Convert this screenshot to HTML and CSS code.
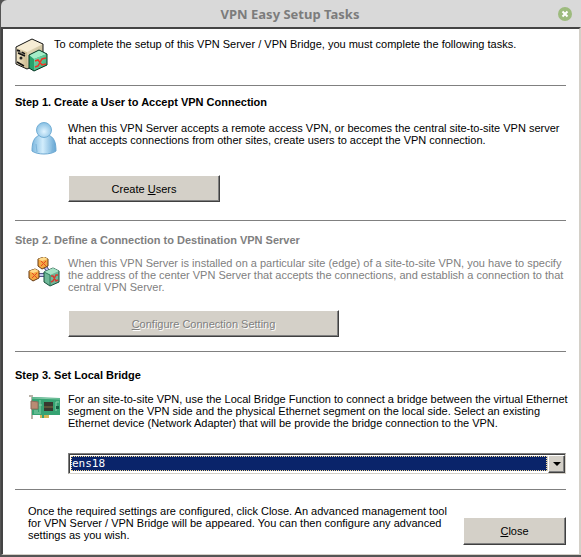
FILE: index.html
```
<!DOCTYPE html>
<html lang="en">
  <head>
    <meta charset="UTF-8" />
    <meta name="viewport" content="width=device-width, initial-scale=1.0" />
    <title>VPN Easy Setup Tasks</title>
    <link rel="stylesheet" href="styles.css" />
  </head>
  <body>
    <div class="window">
      <header class="titlebar">
        <h1>VPN Easy Setup Tasks</h1>
        <button class="win-close" type="button" aria-label="Close window">
          <svg width="14" height="14" viewBox="0 0 14 14">
            <circle cx="7" cy="7" r="7" fill="#9dbb7e" />
            <path d="M4.5 4.5l5 5M9.5 4.5l-5 5" stroke="#fff" stroke-width="2" />
          </svg>
        </button>
      </header>
      <main class="content">
        <section class="intro">
          <svg class="icon" width="34" height="34" viewBox="0 0 34 34">
            <defs>
              <linearGradient id="side" x1="0" y1="0" x2="1" y2="1">
                <stop offset="0" stop-color="#fff8df" />
                <stop offset="1" stop-color="#b7a77f" />
              </linearGradient>
              <linearGradient id="front" x1="0" y1="0" x2="1" y2="0">
                <stop offset="0" stop-color="#f4e9ca" />
                <stop offset="1" stop-color="#cdbb91" />
              </linearGradient>
              <linearGradient id="green" x1="0" y1="0" x2="1" y2="1">
                <stop offset="0" stop-color="#7fdcae" />
                <stop offset="1" stop-color="#2fa873" />
              </linearGradient>
            </defs>
            <path d="M1 9L17 1l11 5v18L12 31 1 26z" fill="url(#side)" />
            <path d="M1 9l11 5v17L1 26z" fill="url(#front)" />
            <path d="M1 9L17 1l11 5-16 8z" fill="#f6ecd4" />
            <path d="M1 9L17 1l11 5v18L12 31 1 26z" fill="none" stroke="#151515" />
            <path d="M2 12l8 3v2l-8-3z" fill="#8b8678" />
            <path d="M2 12l3 1M7 14l3 2M3 15l7 3M2 24l7 4" stroke="#111" stroke-width="1.5" />
            <circle cx="6" cy="20" r="1.5" fill="#222" />
            <path d="M14 17l10-5 8 4v11l-13 6-5-3z" fill="#28a16c" />
            <path d="M14 17l10-5 8 4-13 5z" fill="#a3ecc7" />
            <path d="M19 21l13-5v11l-13 6z" fill="url(#green)" />
            <path d="M14 17l10-5 8 4v11l-13 6-5-3z" fill="none" stroke="#063624" />
            <path d="M20 23l3-1 4 5 4-1M20 29l3-1 4-7 4-1" fill="none" stroke="#f03224" stroke-width="1.5" />
          </svg>
          <p>To complete the setup of this VPN Server / VPN Bridge, you must complete the following tasks.</p>
        </section>

        <section class="step">
          <h2>Step 1. Create a User to Accept VPN Connection</h2>
          <div class="row">
            <svg class="icon" width="32" height="34" viewBox="0 0 32 34">
              <defs>
                <radialGradient id="head" cx=".5" cy=".6" r=".6">
                  <stop offset="0" stop-color="#e1f4ff" />
                  <stop offset="1" stop-color="#86bfe3" />
                </radialGradient>
                <linearGradient id="torso" x1="0" y1="0" x2="1" y2="0">
                  <stop offset="0" stop-color="#7db8df" />
                  <stop offset=".45" stop-color="#d2edfc" />
                  <stop offset="1" stop-color="#63a5d3" />
                </linearGradient>
              </defs>
              <path d="M4 29c0-9 2-14 8-16h8c6 2 8 7 8 16-5 4-19 4-24 0z" fill="url(#torso)" stroke="#6ca8d2" />
              <path d="M9 30l-1-8M24 30l1-8" stroke="#7db4da" />
              <circle cx="16" cy="8" r="7.5" fill="url(#head)" stroke="#74afd6" />
            </svg>
            <p>When this VPN Server accepts a remote access VPN, or becomes the central site-to-site VPN server that accepts connections from other sites, create users to accept the VPN connection.</p>
          </div>
          <button class="btn users" type="button">Create <u>U</u>sers</button>
        </section>

        <section class="step disabled">
          <h2>Step 2. Define a Connection to Destination VPN Server</h2>
          <div class="row">
            <svg class="icon" width="32" height="34" viewBox="0 0 32 34">
              <path d="M9 18h11M16 8l6 9" stroke="#55578a" stroke-width="4" />
              <path d="M9 18h11M16 8l6 9" stroke="#c5c7ea" stroke-width="2" />
              <path d="M10 2l6-2 4 2v7l-6 3-4-3z" fill="#f3a742" stroke="#673b13" />
              <path d="M10 2l6-2 4 2-6 2z" fill="#ffdb8c" />
              <path d="M13 4l5 5M13 9l5-5" stroke="#e54a20" />
              <path d="M1 14l6-2 4 2v7l-6 3-4-3z" fill="#f3a742" stroke="#673b13" />
              <path d="M1 14l6-2 4 2-6 2z" fill="#ffdb8c" />
              <path d="M4 16l5 5M4 21l5-5" stroke="#e54a20" />
              <path d="M16 15l9-4 6 3v11l-9 4-6-4z" fill="#6fb898" stroke="#174e3b" />
              <path d="M16 15l9-4 6 3-9 4z" fill="#a5e2c5" />
              <path d="M16 15l6 3v11" fill="none" stroke="#2f7c5d" />
              <path d="M23 19h2l3 5 2-1M23 25l2-1 3-6h2" fill="none" stroke="#d63b30" stroke-width="1.5" />
            </svg>
            <p>When this VPN Server is installed on a particular site (edge) of a site-to-site VPN, you have to specify the address of the center VPN Server that accepts the connections, and establish a connection to that central VPN Server.</p>
          </div>
          <button class="btn connection" type="button" disabled><u>C</u>onfigure Connection Setting</button>
        </section>

        <section class="step bridge">
          <h2>Step 3. Set Local Bridge</h2>
          <div class="row">
            <svg class="icon" width="32" height="34" viewBox="0 0 32 34">
              <path d="M1 3h3v23" fill="none" stroke="#b9b2a8" stroke-width="2" />
              <path d="M4 4l28 1v17H21v3h-9v-3H4z" fill="#36a373" />
              <path d="M4 5l28 1" stroke="#87c9a8" />
              <path d="M3 8l7 1v7H3z" fill="#b98b73" stroke="#8e6d5d" />
              <path d="M16 9h9v9h-9z" fill="#38382f" />
              <path d="M16 14h9" stroke="#807344" />
              <path d="M6 18h4M12 7v12M28 9v9M11 12h3M6 20h7M28 9h3" stroke="#8bd2ac" />
              <path d="M12 22h2v3h-2zM16 22h5v3h-5z" fill="#d5b657" />
              <path d="M28 13h3v3h-3z" fill="#175f43" />
            </svg>
            <p>For an site-to-site VPN, use the Local Bridge Function to connect a bridge between the virtual Ethernet segment on the VPN side and the physical Ethernet segment on the local side. Select an existing Ethernet device (Network Adapter) that will be provide the bridge connection to the VPN.</p>
          </div>
          <div class="combo">
            <select aria-label="Ethernet device">
              <option>ens18</option>
            </select>
            <span class="arrow"></span>
          </div>
        </section>

        <footer class="bottom">
          <p>Once the required settings are configured, click Close. An advanced management tool for VPN Server / VPN Bridge will be appeared. You can then configure any advanced settings as you wish.</p>
          <button class="btn close" type="button"><u>C</u>lose</button>
        </footer>
      </main>
    </div>
  </body>
</html>
```
FILE: styles.css
```
* {
  box-sizing: border-box;
  margin: 0;
  padding: 0;
}
body {
  background-color: #555;
  font-family: "Liberation Sans", Arial, sans-serif;
  font-size: 11px;
  line-height: 12px;
  color: #000;
}
.window {
  margin-left: 1px;
  background-color: #d9d9d9;
  border-radius: 6px 0 0 0;
}
.titlebar {
  display: grid;
  grid-template-columns: 20px 1fr 20px;
  align-items: center;
  height: 27px;
  padding: 0 6px 0 4px;
}
.titlebar h1 {
  grid-column: 2;
  font-family: "Noto Sans", sans-serif;
  font-size: 13px;
  line-height: 20px;
  text-align: center;
  color: #7c7c7c;
}
.win-close {
  height: 14px;
  border: none;
  background: none;
}
.win-close svg {
  display: block;
  margin: 0 auto;
}
.content {
  padding: 9px 13px 9px 12px;
  background-color: #fff;
  border-top: 2px solid #444;
  border-left: 2px solid #444;
  border-right: 2px solid #d4d0c8;
  border-bottom: 1px solid #d4d0c8;
}
.icon {
  display: block;
  flex: none;
}
.intro {
  display: flex;
  gap: 5px;
  height: 47px;
}
.step {
  padding: 10px 0 18px;
  border-top: 1px solid #808080;
}
.step h2 {
  margin-bottom: 14px;
  font-size: 11px;
}
.row {
  display: flex;
  gap: 8px;
  padding-left: 13px;
  margin-right: -8px;
}
.row p {
  min-width: 0;
  flex: 1;
}
.row .icon {
  margin-bottom: -10px;
}
.btn {
  display: block;
  height: 27px;
  background-color: #d4d0c8;
  border: 1px solid;
  border-color: #fff #404040 #404040 #fff;
  box-shadow: inset -1px -1px #808080;
  font: inherit;
  color: #000;
}
.btn u {
  text-underline-offset: 1px;
}
.step .btn {
  margin: 29px 0 0 53px;
}
.users {
  width: 152px;
}
.disabled {
  padding: 13px 0 14px;
  color: #808080;
}
.disabled h2 {
  margin-bottom: 11px;
}
.disabled .btn {
  width: 271px;
  margin-top: 17px;
  color: #808080;
  text-shadow: 1px 1px #fff;
}
.bridge {
  padding: 17px 0 15px;
}
.bridge h2 {
  margin-bottom: 12px;
}
.combo {
  display: flex;
  height: 21px;
  margin: 24px 0 0 53px;
  padding: 1px;
  border: 1px solid;
  border-color: #808080 #d4d0c8 #d4d0c8 #808080;
  box-shadow: inset 1px 1px #404040;
  position: relative;
}
.combo select {
  width: 100%;
  padding-left: 1px;
  appearance: none;
  background-color: #0a246a;
  border: 1px solid #fff;
  border-right: 17px solid #d4d0c8;
  border-radius: 0;
  font-family: "DejaVu Sans Mono", monospace;
  font-size: 11px;
  color: #fff;
}
.combo::before {
  content: "";
  position: absolute;
  inset: 2px 18px 2px 2px;
  border: 1px dotted #f5db95;
  pointer-events: none;
}
.arrow {
  position: absolute;
  top: 1px;
  right: 0;
  bottom: 0;
  width: 17px;
  background-color: #d4d0c8;
  border: 1px solid;
  border-color: #fff #404040 #404040 #fff;
  box-shadow: inset -1px -1px #808080;
  pointer-events: none;
}
.arrow::before {
  content: "";
  position: absolute;
  top: 6px;
  left: 4px;
  border: 4px solid transparent;
  border-top-color: #000;
  border-bottom: none;
}
.bottom {
  display: flex;
  justify-content: space-between;
  padding: 15px 0 0 13px;
  border-top: 1px solid #808080;
}
.bottom p {
  width: 424px;
}
.close {
  width: 103px;
  height: 28px;
  margin-top: 12px;
}
```
